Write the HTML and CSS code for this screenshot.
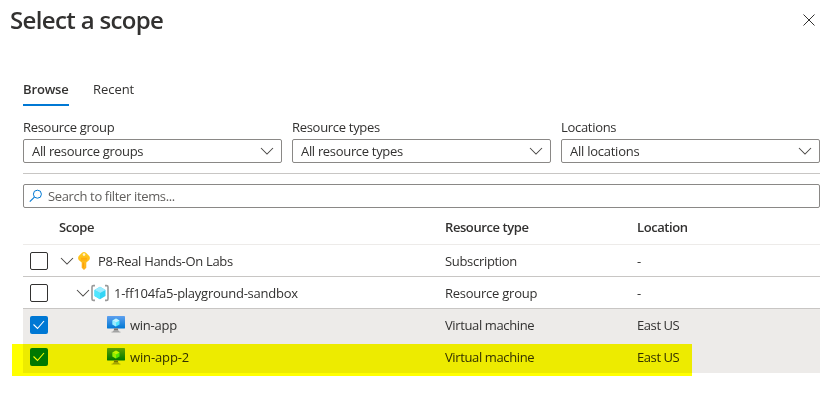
FILE: index.html
```html
<!DOCTYPE html>
<html lang="en">
<head>
<meta charset="utf-8">
<title>Select a scope</title>
<link rel="stylesheet" href="styles.css">
</head>
<body>
<svg width="0" height="0" class="defs">
  <defs>
    <linearGradient id="screen" x1="0" y1="0" x2="0" y2="1"><stop offset="0" stop-color="#5ea0ef"/><stop offset="1" stop-color="#0078d4"/></linearGradient>
    <linearGradient id="gold" x1="0" y1="0" x2="0" y2="1"><stop offset="0" stop-color="#ffca1c"/><stop offset="1" stop-color="#feb01b"/></linearGradient>
    <symbol id="chevron" viewBox="0 0 14 8"><path d="M1 1l6 6 6-6" fill="none" stroke="#484644" stroke-width="1.05"/></symbol>
    <symbol id="check" viewBox="0 0 18 18"><path d="M3.500 8.500l4 4 6.500-7.500" fill="none" stroke="#fff" stroke-width="1.1"/></symbol>
    <symbol id="vm" viewBox="0 0 18 18">
      <rect y="0" width="18" height="12.5" rx=".4" fill="url(#screen)"/>
      <path d="M9 2.400l3.500 2v4L9 10.400 5.500 8.400v-4z" fill="#50e6ff"/>
      <path d="M9 2.400l3.500 2L9 6.400 5.500 4.400z" fill="#c3f1ff"/>
      <path d="M5.500 4.400L9 6.400v4L5.500 8.400z" fill="#9cebff"/>
      <path d="M7 12.500h4c0 2 .5 3 2.500 3.300v.7h-9v-.7C6.500 15.500 7 14.500 7 12.500z" fill="#a3a3a3"/>
      <path d="M7 12.500h4V14H7z" fill="#767676"/>
    </symbol>
  </defs>
</svg>
<main class="panel">
  <header class="top">
    <h1>Select a scope</h1>
    <svg class="close" viewBox="0 0 12 12"><path d="M.5.5l11 11M11.500.5l-11 11" stroke="#323130" stroke-width="1"/></svg>
  </header>
  <div class="content">
    <nav class="tabs"><a class="tab active">Browse</a><a class="tab recent">Recent</a></nav>
    <div class="filters">
      <div><label>Resource group</label><div class="select"><span class="v1">All resource groups</span><svg><use href="#chevron"/></svg></div></div>
      <div><label>Resource types</label><div class="select"><span class="v1">All resource types</span><svg><use href="#chevron"/></svg></div></div>
      <div><label>Locations</label><div class="select"><span>All locations</span><svg><use href="#chevron"/></svg></div></div>
    </div>
    <div class="search">
      <svg viewBox="0 0 14 14"><path d="M5.400 8.100L.8 12.700" stroke="#0078d4" stroke-width="1.100"/><circle cx="8.400" cy="5.200" r="4" fill="none" stroke="#0078d4"/></svg>
      <span>Search to filter items...</span>
    </div>
    <div class="table">
      <div class="row head"><span class="scope">Scope</span><span class="type">Resource type</span><span class="loc">Location</span></div>
      <div class="row">
        <i class="box"></i>
        <div class="scope level1"><svg class="chev"><use href="#chevron"/></svg>
          <svg class="icon key" viewBox="0 0 18 18"><path d="M9 0Q7.800 0 6.800 1L4 3.800Q3.100 4.800 3.100 6T4 8.200L6.700 10.600v5.200L9 18l2.300-2.200v-5.200L14 8.200Q14.900 7.200 14.900 6T14 3.800L11.200 1Q10.200 0 9 0z" fill="url(#gold)"/><circle cx="9" cy="2.600" r="1.300" fill="#fff3d0"/><path d="M6 6.300h6M6 7.900h6" stroke="#ff9f00" stroke-width=".7"/><path d="M8.300 10.500v5" stroke="#ff9300" stroke-width=".8"/></svg>
          <span class="tight">P8-Real Hands-On Labs</span></div>
        <span class="type tight">Subscription</span><span class="loc">-</span>
      </div>
      <div class="row">
        <i class="box"></i>
        <div class="scope level2"><svg class="chev"><use href="#chevron"/></svg>
          <svg class="icon group" viewBox="0 0 18 18"><path d="M4 1.600H2.500Q1 1.600 1 3v12q0 1.400 1.500 1.400H4M14 1.600h1.500q1.500 0 1.500 1.400v12q0 1.400-1.500 1.400H14" fill="none" stroke="#999" stroke-width="1.600"/><path d="M9 2.800l5.500 3.100v6.200L9 15.200l-5.500-3.100V5.900z" fill="#32d4f5"/><path d="M9 2.800l5.500 3.100L9 9 3.500 5.900z" fill="#9cebff"/><path d="M3.500 5.900L9 9v6.200l-5.500-3.100z" fill="#50e6ff"/></svg>
          <span>1-ff104fa5-playground-sandbox</span></div>
        <span class="type">Resource group</span><span class="loc">-</span>
      </div>
      <div class="row selected">
        <i class="box checked"><svg><use href="#check"/></svg></i>
        <div class="scope level3"><svg class="icon"><use href="#vm"/></svg><span>win-app</span></div>
        <span class="type vmtype">Virtual machine</span><span class="loc us">East US</span>
      </div>
      <div class="row selected">
        <i class="box checked"><svg><use href="#check"/></svg></i>
        <div class="scope level3"><svg class="icon"><use href="#vm"/></svg><span class="wide">win-app-2</span></div>
        <span class="type vmtype">Virtual machine</span><span class="loc us">East US</span>
        <div class="highlight"></div>
      </div>
    </div>
  </div>
</main>
</body>
</html>
```
FILE: styles.css
```css
* { box-sizing: border-box; }
body { margin: 0; background: #fff; color: #323130; font: 13px/18px "Open Sans", sans-serif; letter-spacing: -0.25px; }
svg { display: block; flex: none; }
.defs { position: absolute; }
.panel { width: 828px; height: 400px; overflow: hidden; }
.top { display: flex; justify-content: space-between; height: 82px; padding: 3px 13px 0 10px; }
h1 { margin: 0; font-size: 24px; line-height: 33px; font-weight: 600; letter-spacing: -0.65px; white-space: nowrap; }
.close { width: 12px; height: 12px; margin-top: 11px; }
.content { width: 797px; margin-left: 23px; }
.tabs { display: flex; gap: 24px; height: 37px; }
.tab { height: 24px; line-height: 15px; }
.recent { letter-spacing: -0.05px; }
.active { width: 46px; font-weight: 600; letter-spacing: -0.15px; border-bottom: 2px solid #0078d4; }
.filters { display: grid; grid-template-columns: repeat(3, 259px); gap: 10px; height: 55px; border-bottom: 1px solid #c8c6c4; }
label { display: block; height: 20px; line-height: 17px; letter-spacing: -0.3px; }
.select { display: flex; align-items: center; justify-content: space-between; height: 24px; padding: 0 7px 0 8px; border: 1px solid #8a8886; border-radius: 2px; }
.select svg { width: 14px; height: 8px; }
.v1 { letter-spacing: -0.32px; }
.search { display: flex; align-items: center; height: 24px; margin-top: 10px; padding-left: 5px; border: 1px solid #8a8886; border-radius: 2px; color: #605e5c; letter-spacing: -0.35px; }
.search svg { width: 14px; height: 14px; margin-right: 5px; }
.row { position: relative; display: grid; grid-template-columns: 36px 386px 192px 1fr; align-items: center; height: 32px; border-bottom: 1px solid #c8c6c4; white-space: nowrap; }
.head { height: 37px; padding-top: 2px; font-weight: 600; letter-spacing: -0.42px; border-color: #edebe9; }
.head .scope { grid-column: 2; }
.selected { background: #edebe9; border-color: #edebe9; }
.box { width: 18px; height: 18px; margin-left: 7px; border: 1px solid #323130; border-radius: 2px; }
.checked { border: 0; background: #0078d4; }
.checked svg { width: 18px; height: 18px; }
.scope { display: flex; align-items: center; }
.chev { width: 14px; height: 8px; }
.level1 { padding-left: 1px; }
.level2 { padding-left: 17px; }
.level3 { padding-left: 48px; }
.icon { width: 18px; height: 18px; margin-right: 5px; }
.key { margin: 0 5.5px 0 0.5px; }
.group { margin: 0 5px 0 1px; }
.tight { letter-spacing: -0.31px; }
.vmtype { letter-spacing: -0.38px; }
.us { letter-spacing: -0.42px; }
.wide { letter-spacing: -0.13px; }
.highlight { position: absolute; left: -11px; top: 3px; width: 680px; height: 32px; background: #ff0; mix-blend-mode: multiply; }
```
